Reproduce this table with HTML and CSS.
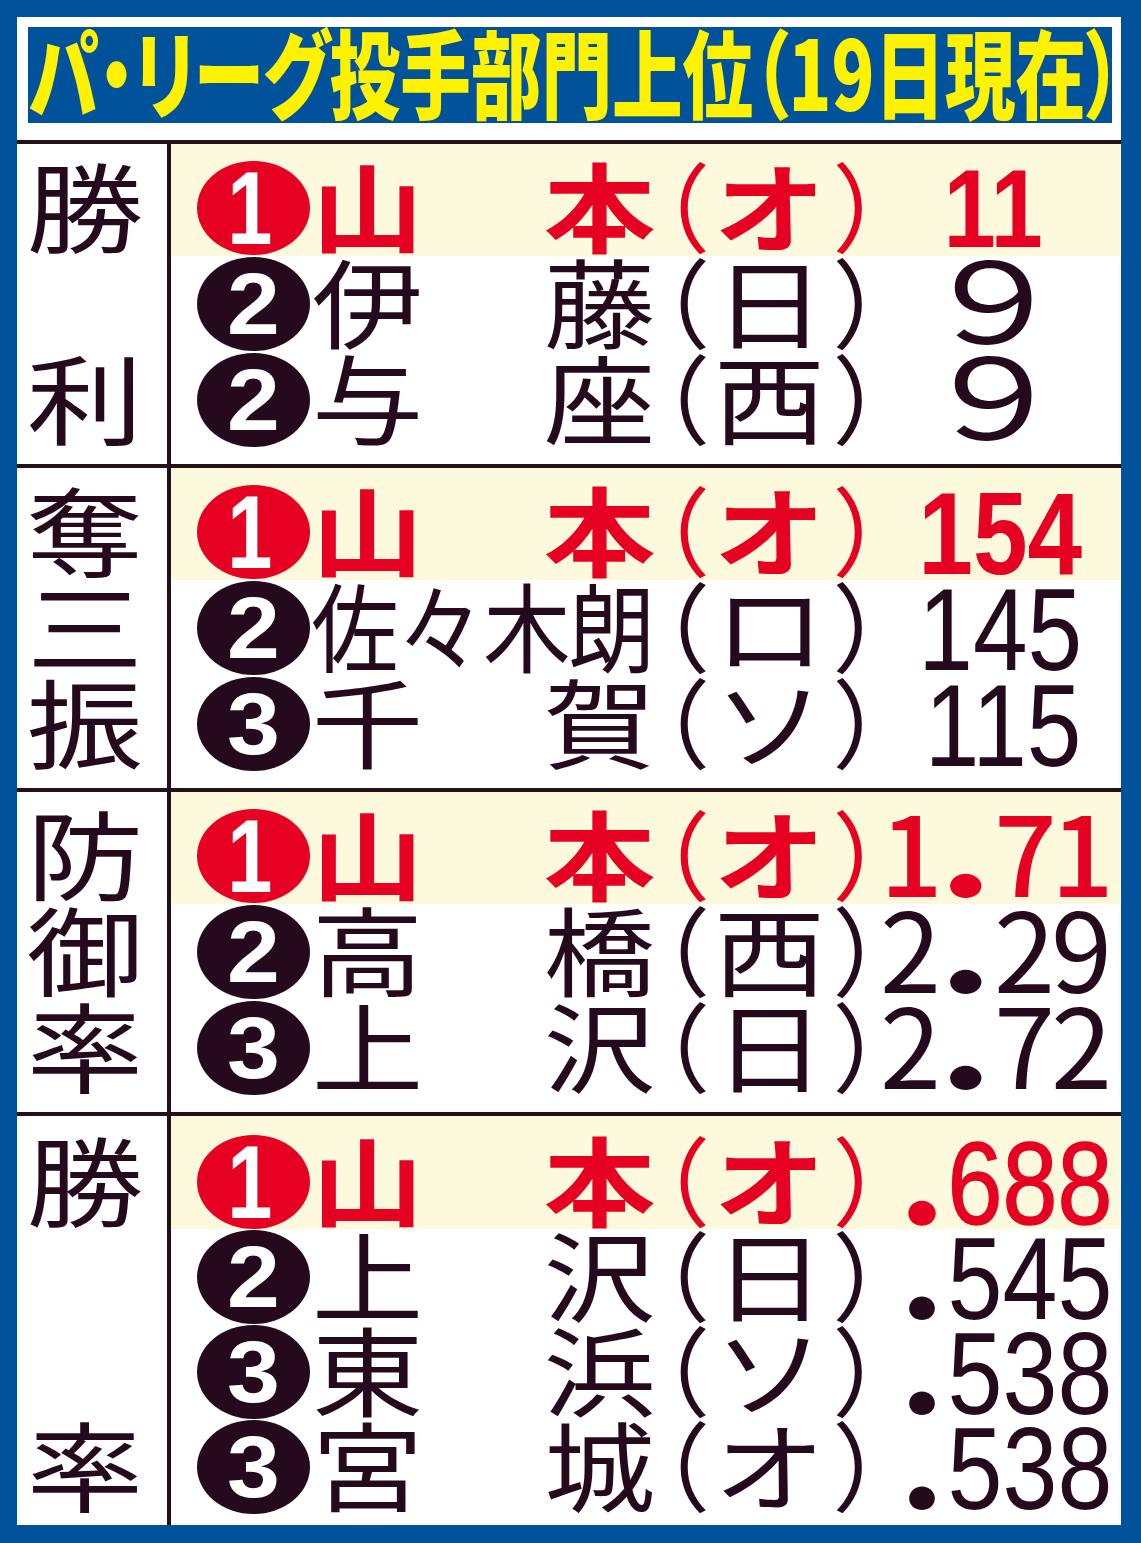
FILE: index.html
```html
<!DOCTYPE html>
<html lang="ja">
<head>
<meta charset="utf-8">
<title>パ・リーグ投手部門上位</title>
<link rel="stylesheet" href="styles.css">
</head>
<body>
<div class="sheet">
  <h1 class="title"><span class="title-text">パ・リーグ投手部門上位（19日現在）</span></h1>
  <div class="table">
    <section class="sec">
      <div class="label"><span class="lc">勝</span><span class="lc">利</span></div>
      <div class="rows">
        <div class="row lead">
          <span class="rank"><span class="rn one">1</span></span>
          <span class="name"><span class="ch">山</span><span class="ch">本</span></span>
          <span class="po"><span>（</span></span><span class="team"><span>オ</span></span><span class="pc"><span>）</span></span>
          <span class="num n1"><span class="nv lat">11</span></span>
        </div>
        <div class="row">
          <span class="rank"><span class="rn">2</span></span>
          <span class="name"><span class="ch">伊</span><span class="ch">藤</span></span>
          <span class="po"><span>（</span></span><span class="team"><span>日</span></span><span class="pc"><span>）</span></span>
          <span class="num n1"><span class="nv cjk">９</span></span>
        </div>
        <div class="row">
          <span class="rank"><span class="rn">2</span></span>
          <span class="name"><span class="ch">与</span><span class="ch">座</span></span>
          <span class="po"><span>（</span></span><span class="team"><span>西</span></span><span class="pc"><span>）</span></span>
          <span class="num n1"><span class="nv cjk">９</span></span>
        </div>
      </div>
    </section>

    <section class="sec">
      <div class="label"><span class="lc">奪</span><span class="lc">三</span><span class="lc">振</span></div>
      <div class="rows">
        <div class="row lead">
          <span class="rank"><span class="rn one">1</span></span>
          <span class="name"><span class="ch">山</span><span class="ch">本</span></span>
          <span class="po"><span>（</span></span><span class="team"><span>オ</span></span><span class="pc"><span>）</span></span>
          <span class="num n2"><span class="nv">154</span></span>
        </div>
        <div class="row">
          <span class="rank"><span class="rn">2</span></span>
          <span class="name four"><span class="ch">佐</span><span class="ch">々</span><span class="ch">木</span><span class="ch">朗</span></span>
          <span class="po"><span>（</span></span><span class="team"><span>ロ</span></span><span class="pc"><span>）</span></span>
          <span class="num n2"><span class="nv">145</span></span>
        </div>
        <div class="row">
          <span class="rank"><span class="rn">3</span></span>
          <span class="name"><span class="ch">千</span><span class="ch">賀</span></span>
          <span class="po"><span>（</span></span><span class="team"><span>ソ</span></span><span class="pc"><span>）</span></span>
          <span class="num n2"><span class="nv">115</span></span>
        </div>
      </div>
    </section>

    <section class="sec">
      <div class="label"><span class="lc">防</span><span class="lc">御</span><span class="lc">率</span></div>
      <div class="rows">
        <div class="row lead">
          <span class="rank"><span class="rn one">1</span></span>
          <span class="name"><span class="ch">山</span><span class="ch">本</span></span>
          <span class="po"><span>（</span></span><span class="team"><span>オ</span></span><span class="pc"><span>）</span></span>
          <span class="num n3"><span class="d">1</span><span class="d"><span class="dot">.</span></span><span class="d">7</span><span class="d">1</span></span>
        </div>
        <div class="row">
          <span class="rank"><span class="rn">2</span></span>
          <span class="name"><span class="ch">高</span><span class="ch">橋</span></span>
          <span class="po"><span>（</span></span><span class="team"><span>西</span></span><span class="pc"><span>）</span></span>
          <span class="num n3"><span class="d">2</span><span class="d"><span class="dot">.</span></span><span class="d">2</span><span class="d">9</span></span>
        </div>
        <div class="row">
          <span class="rank"><span class="rn">3</span></span>
          <span class="name"><span class="ch">上</span><span class="ch">沢</span></span>
          <span class="po"><span>（</span></span><span class="team"><span>日</span></span><span class="pc"><span>）</span></span>
          <span class="num n3"><span class="d">2</span><span class="d"><span class="dot">.</span></span><span class="d">7</span><span class="d">2</span></span>
        </div>
      </div>
    </section>

    <section class="sec sec-four">
      <div class="label"><span class="lc">勝</span><span class="lc">率</span></div>
      <div class="rows">
        <div class="row lead">
          <span class="rank"><span class="rn one">1</span></span>
          <span class="name"><span class="ch">山</span><span class="ch">本</span></span>
          <span class="po"><span>（</span></span><span class="team"><span>オ</span></span><span class="pc"><span>）</span></span>
          <span class="num n4"><span class="nv"><span class="dot">.</span>688</span></span>
        </div>
        <div class="row">
          <span class="rank"><span class="rn">2</span></span>
          <span class="name"><span class="ch">上</span><span class="ch">沢</span></span>
          <span class="po"><span>（</span></span><span class="team"><span>日</span></span><span class="pc"><span>）</span></span>
          <span class="num n4"><span class="nv"><span class="dot">.</span>545</span></span>
        </div>
        <div class="row">
          <span class="rank"><span class="rn">3</span></span>
          <span class="name"><span class="ch">東</span><span class="ch">浜</span></span>
          <span class="po"><span>（</span></span><span class="team"><span>ソ</span></span><span class="pc"><span>）</span></span>
          <span class="num n4"><span class="nv"><span class="dot">.</span>538</span></span>
        </div>
        <div class="row">
          <span class="rank"><span class="rn">3</span></span>
          <span class="name"><span class="ch">宮</span><span class="ch">城</span></span>
          <span class="po"><span>（</span></span><span class="team"><span>オ</span></span><span class="pc"><span>）</span></span>
          <span class="num n4"><span class="nv"><span class="dot">.</span>538</span></span>
        </div>
      </div>
    </section>
  </div>
</div>
</body>
</html>
```

FILE: styles.css
```css
* {
  box-sizing: border-box;
  margin: 0;
  padding: 0;
}

html,
body {
  background: #00529b;
}

body {
  width: 1141px;
  height: 1543px;
  padding: 17px 20px 18px 17px;
  font-family: "Noto Sans CJK JP", "Noto Sans", sans-serif;
  color: #250a1e;
  overflow: hidden;
}

.sheet {
  background: #fff;
  height: 1508px;
  display: flex;
  flex-direction: column;
}

/* ---------- title ---------- */
.title {
  margin: 10px 9px 0 11px;
  height: 96px;
  background: #00529b;
  color: #fff200;
  font-size: 96px;
  font-weight: 900;
  line-height: 85px;
  white-space: nowrap;
  overflow: hidden;
}

.title-text {
  display: inline-block;
  margin-left: 1px;
  font-feature-settings: "palt";
  transform: scaleX(0.735);
  transform-origin: 0 50%;
}

/* ---------- table ---------- */
.table {
  margin-top: 17px;
  border-top: 4px solid #231018;
}

.sec {
  display: grid;
  grid-template-columns: 150px minmax(0, 1fr);
  height: 320px;
}

.sec + .sec {
  border-top: 4px solid #231018;
  height: 324px;
}

.sec.sec-four {
  height: 413px;
}

/* label column */
.label {
  display: flex;
  flex-direction: column;
  justify-content: space-between;
  padding: 16px 14px 16px 0;
}

.sec-four .label {
  padding: 18px 14px 11px 0;
}

.lc {
  display: block;
  height: 96px;
  text-align: center;
  font-size: 97px;
  line-height: 85px;
  transform: scaleX(1.2);
}

.sec-four .lc {
  height: 95px;
}

/* rows column */
.rows {
  border-left: 4px solid #231018;
  display: flex;
  flex-direction: column;
  min-width: 0;
}

.row {
  display: flex;
  align-items: center;
  height: 96px;
  padding-left: 26px;
  font-size: 97px;
  line-height: 85px;
}

.row.lead {
  height: 112px;
  padding-top: 16px;
  background: #fdf9dc;
  color: #e60021;
}

.sec-four .row {
  height: 95px;
}

.sec-four .row.lead {
  height: 113px;
  padding-top: 18px;
}

/* rank circle */
.rank {
  flex: none;
  width: 113px;
  height: 94px;
  border-radius: 50%;
  background: #250a1e;
  display: flex;
  align-items: center;
  justify-content: center;
  color: #fff;
  font-family: "Liberation Sans", Arial, sans-serif;
  font-weight: 700;
  font-size: 88px;
  line-height: 1;
}

.lead .rank {
  background: #e60021;
  font-size: 104px;
}

.rn {
  display: inline-block;
  transform: scaleX(1.08);
}

.rn.one {
  transform: translateX(-4px) scaleX(0.78);
}

/* name */
.name {
  flex: none;
  width: 343px;
  height: 96px;
  margin-left: 2px;
  display: flex;
  justify-content: space-between;
}

.ch {
  display: flex;
  justify-content: center;
  width: 111px;
  transform: scaleX(1.15);
}

.name.four .ch {
  width: 85.75px;
  transform: scaleX(0.9);
}

.lead .name,
.lead .team {
  font-weight: 700;
}

/* team in parentheses */
.po,
.team,
.pc {
  flex: none;
  height: 96px;
  display: flex;
  justify-content: center;
}

.po {
  width: 62px;
}

.team {
  width: 104px;
}

.pc {
  width: 71px;
}

.po span,
.pc span {
  display: inline-block;
  font-weight: 400;
  font-feature-settings: "halt";
}

.team span {
  display: inline-block;
  transform: scaleX(1.15);
}

/* numbers */
.num {
  flex: 1 1 0;
  min-width: 0;
  height: 96px;
  display: flex;
}

.nv {
  display: inline-block;
  flex: none;
  white-space: nowrap;
  font-family: "Liberation Sans", Arial, sans-serif;
}

.n1 {
  justify-content: center;
  padding-right: 27px;
}

.n1 .lat {
  font-size: 112px;
  line-height: 98px;
  font-weight: 700;
  transform: scaleX(0.84);
}

.n1 .cjk {
  font-family: "Noto Sans CJK JP", sans-serif;
  font-size: 113px;
  line-height: 79px;
  transform: scaleX(1.3);
}

.n2 {
  justify-content: flex-end;
  padding-right: 39px;
}

.n2 .nv {
  font-size: 117px;
  line-height: 100px;
  transform: scaleX(0.84);
  transform-origin: 100% 50%;
}

.lead .n2 .nv {
  font-weight: 700;
}

.lead .n4 .nv {
  -webkit-text-stroke: 1.5px #e60021;
}

.n3 {
  justify-content: flex-end;
  padding-right: 13px;
}

.d {
  display: block;
  flex: none;
  text-align: center;
  white-space: nowrap;
  width: 57px;
  font-size: 110px;
  line-height: 82px;
}

.lead .d {
  font-weight: 500;
}

.n4 {
  justify-content: flex-end;
  padding-right: 9px;
}

.n4 .nv {
  font-size: 117px;
  line-height: 100px;
  transform: scaleX(0.845);
  transform-origin: 100% 50%;
}

.dot {
  display: inline-block;
  font-family: "Lato", sans-serif;
  font-weight: 400;
  font-size: 160%;
  line-height: 0;
  margin-right: 8px;
  transform: scaleX(1.3);
}

.d .dot {
  font-size: 175%;
  margin-right: 0;
}
```
